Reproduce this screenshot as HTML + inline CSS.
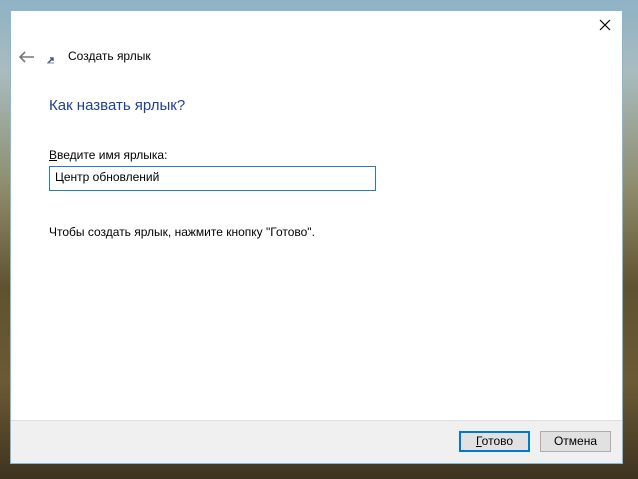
<!DOCTYPE html>
<html><head><meta charset="utf-8"><style>
body{margin:0;width:638px;height:479px;overflow:hidden;position:relative;font-family:"Segoe UI","Liberation Sans","Noto Sans CJK SC",sans-serif;font-size:12px;color:#000;
background:linear-gradient(180deg,#8fb2c4 0%,#a9bcbf 15%,#8c8a6a 40%,#5e5330 60%,#6a5a35 80%,#3d3320 100%);}
.win{position:absolute;left:10px;top:10px;width:613px;height:454px;background:#fff;border:1px solid #7fb8e0;box-sizing:border-box;}
.foot{position:absolute;left:0;right:0;bottom:0;height:42px;background:#f0f0f0;border-top:1px solid #dfdfdf;}
.t{position:absolute;white-space:nowrap}
.btn{position:absolute;top:10px;width:71px;height:21px;box-sizing:border-box;background:#e1e1e1;border:1px solid #adadad;text-align:center;line-height:19px;}
</style></head><body>
<div class="win">
<svg style="position:absolute;left:588px;top:8px" width="12" height="12"><path d="M1 1L11 11M11 1L1 11" stroke="#000" stroke-width="1.2"/></svg>
<svg style="position:absolute;left:8px;top:40px" width="16" height="12"><path d="M1 6H15M6 1L1 6L6 11" stroke="#777" stroke-width="1.6" fill="none"/></svg>
<svg style="position:absolute;left:36px;top:45px" width="8" height="8"><path d="M1 7L6 2M3 2H6V5" stroke="#2a4a8a" stroke-width="1.3" fill="none"/><path d="M0 7H7" stroke="#888"/></svg>
<div class="t" style="left:57px;top:38px;">Создать ярлык</div>
<div class="t" style="left:38px;top:86px;font-size:15px;color:#1f3f99;">Как назвать ярлык?</div>
<div class="t" style="left:38px;top:137px;"><u>В</u>ведите имя ярлыка:</div>
<div style="position:absolute;left:38px;top:155px;width:327px;height:25px;border:1px solid #2a7ab8;box-sizing:border-box;padding:3px 5px;">Центр обновлений</div>
<div class="t" style="left:38px;top:214px;">Чтобы создать ярлык, нажмите кнопку "Готово".</div>
<div class="foot">
<div class="btn" style="left:448px;border:2px solid #0078d7;line-height:17px;"><u>Г</u>отово</div>
<div class="btn" style="left:529px;">Отмена</div>
</div>
</div>
</body></html>
